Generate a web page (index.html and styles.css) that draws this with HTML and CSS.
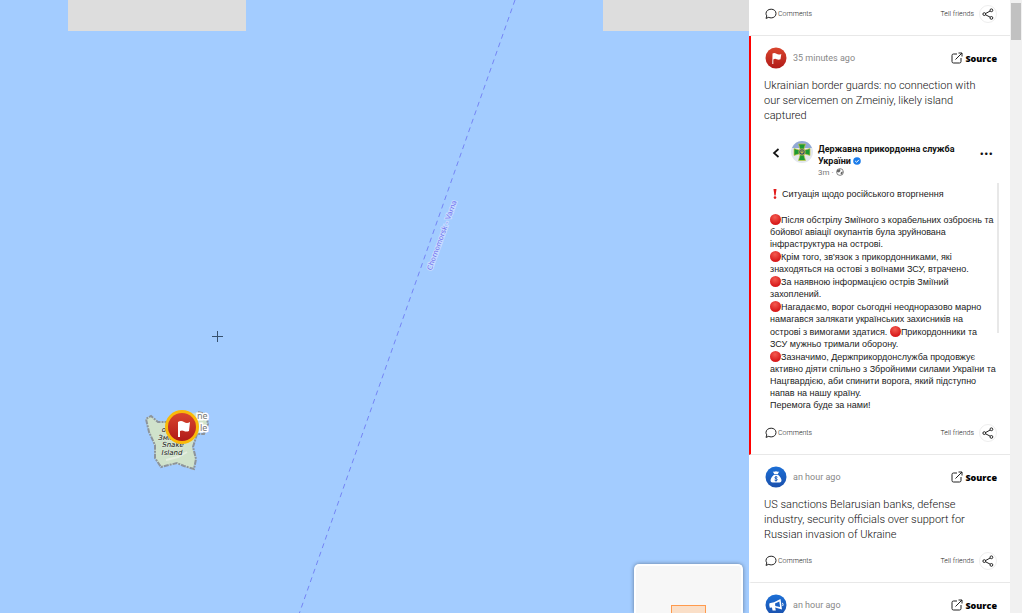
FILE: index.html
```html
<!DOCTYPE html>
<html lang="en">
<head>
    <meta charset="UTF-8">
    <meta name="viewport" content="width=device-width, initial-scale=1.0">
    <title>Live map</title>
    <link rel="stylesheet" href="styles.css">
</head>
<body>
    <!-- shared icons -->
    <svg class="sprite" width="0" height="0">
        <defs>
            <linearGradient id="redFill" x1="0" y1="0" x2="0" y2="1">
                <stop offset="0" stop-color="#d9452e"/>
                <stop offset="1" stop-color="#b01a18"/>
            </linearGradient>
            <linearGradient id="blueFill" x1="0" y1="0" x2="0" y2="1">
                <stop offset="0" stop-color="#1c6fd6"/>
                <stop offset="1" stop-color="#1a50ac"/>
            </linearGradient>
        </defs>
        <symbol id="icon-comment" viewBox="0 0 12 12">
            <path d="M6.200 1.200C9 1.200 11 3 11 5.500S9 9.900 6.200 9.900C5.300 9.900 4.500 9.700 3.800 9.300L1 10.400L1.800 7.900C1.300 7.200 1 6.400 1 5.500C1 3 3.200 1.200 6.200 1.200Z" fill="none" stroke="#222" stroke-width="1"/>
        </symbol>
        <symbol id="icon-share" viewBox="0 0 12 12">
            <path d="M3.600 5.500L8.200 3M3.600 6.800L8.200 9.200" stroke="#222" stroke-width="1"/>
            <g fill="none" stroke="#222" stroke-width="1">
                <circle cx="2.300" cy="6.100" r="1.400"/>
                <circle cx="9.400" cy="2.300" r="1.400"/>
                <circle cx="9.400" cy="9.900" r="1.400"/>
            </g>
        </symbol>
        <symbol id="icon-source" viewBox="0 0 12 12">
            <path d="M6 2H2.500Q1 2 1 3.500V9.500Q1 11 2.500 11H8.500Q10 11 10 9.500V6M4.500 7.500L11 1M7.500 1H11V4.500" fill="none" stroke="#222" stroke-width="1"/>
        </symbol>
        <symbol id="icon-flag" viewBox="0 0 22 22">
            <circle cx="11" cy="11" r="10.500" fill="url(#redFill)"/>
            <path d="M7.500 6.500Q9.500 5.500 11.500 6.800T16.300 7L15.500 12.300Q13.500 13.100 11.700 12.200T8.300 12.500V17H7.300Z" fill="#fff"/>
        </symbol>
        <symbol id="icon-money" viewBox="0 0 22 22">
            <circle cx="11" cy="11" r="10.500" fill="url(#blueFill)"/>
            <path d="M7.800 5.500Q9.500 6 11 5.200Q12.500 6 14.200 5.500L12.800 8H9.200ZM9 8.700H13Q16.500 12 16.500 14.500Q16.500 16.500 14.500 16.500H7.500Q5.500 16.500 5.500 14.500Q5.500 12 9 8.700Z" fill="#fff"/>
            <path d="M12.500 11.300Q11 10.200 10 11.200Q9.300 12.300 11 12.600Q12.800 13 12.100 14.200Q11 15.200 9.500 14.100M11 10V15.600" fill="none" stroke="#1a5cbc" stroke-width="0.900"/>
        </symbol>
        <symbol id="icon-horn" viewBox="0 0 22 22">
            <circle cx="11" cy="11" r="10.500" fill="url(#blueFill)"/>
            <path d="M4.500 9.300L9 8.200L15.500 5L17 15.500L10.200 13.500L10.800 16.500H7.600L6.900 13.600L4.800 13.800Q3.700 11.500 4.500 9.300Z" fill="#fff"/>
            <path d="M10 9.500L14.300 7.400L15.100 13L10.300 11.900Z" fill="#1b61c4"/>
            <path d="M17.300 8.800Q18.700 10.200 17.700 12" stroke="#fff" fill="none"/>
        </symbol>
    </svg>

    <main class="map">
        <svg class="map-canvas" width="1600" height="1200" viewBox="0 0 1600 1200">
            <!-- missing tiles -->
            <path d="M68 0H246V31H68ZM603 0H781V31H603Z" fill="#ddd"/>
            <!-- ferry route -->
            <path d="M515 0L93 1200" fill="none" stroke="#7585f5" stroke-width="1" stroke-dasharray="5 4"/>
            <text class="route-name" text-anchor="middle" transform="translate(444 236) rotate(-70)">Chornomorsk - Varna</text>
            <!-- island -->
            <path d="M146 418L151 416L158 421L168 422L184 416L198 412L207 416L207 430L196 434L192 447L196 458L193 470L184 466L177 464L161 467L155 458L154 444L149 432Z" fill="#d0e2cb"/>
            <path d="M198 412L206 414L208 424L204 434L197 434L193 447L196 459L194 469L184 466L177 463L161 467L155 458L155 445L149 432L146 419L151 416L158 422L168 422" fill="none" stroke="#8d949b" stroke-width="2" stroke-dasharray="5 1 2 1"/>
            <path d="M166 460L178 457L187 452" fill="none" stroke="#e5eddf" stroke-width="2"/>
            <g class="island-name" text-anchor="middle">
                <text x="173" y="432">острів</text>
                <text x="172" y="440">Зміїний</text>
                <text x="173" y="447">Snake</text>
                <text x="172" y="455">Island</text>
            </g>
            <g class="village-name">
                <text x="197" y="419">ne</text>
                <text x="200" y="431">le</text>
            </g>
            <circle cx="182" cy="427" r="17" fill="#f9b90a"/>
            <circle cx="182" cy="427" r="14" fill="url(#redFill)"/>
            <path d="M178 422Q181 420 184 422T190 422L189 431Q186 432 184 431T180 431V437H178Z" fill="#fff"/>
            <!-- cursor -->
            <path d="M212 336.500H223M217.500 331V342" stroke="#36506e" stroke-width="1"/>
        </svg>
        <div class="minimap"><div class="minimap-view"></div></div>
    </main>

    <aside class="feed">
        <article class="card card-first">
            <footer class="card-foot">
                <a class="comments" href="#"><svg class="icon"><use href="#icon-comment"/></svg>Comments</a>
                <button class="share">Tell friends <span class="share-ring"><svg class="icon"><use href="#icon-share"/></svg></span></button>
            </footer>
        </article>

        <article class="card card-active">
            <header class="card-head">
                <svg class="badge"><use href="#icon-flag"/></svg>
                <span class="time">35 minutes ago</span>
                <a class="source" href="#"><svg class="icon"><use href="#icon-source"/></svg>Source</a>
            </header>
            <h2>Ukrainian border guards: no connection with our servicemen on Zmeiniy, likely island captured</h2>
            <section class="post" lang="uk">
                <header class="post-head">
                    <svg class="back" viewBox="0 0 8 12"><path d="M6.500 2L2 6L6.500 10" fill="none" stroke="#111" stroke-width="1.700"/></svg>
                    <svg class="avatar" viewBox="0 0 22 22">
                        <circle cx="11" cy="11" r="11" fill="#e3e7ef"/>
                        <path d="M1 7Q4 0 11 0T21 7Z" fill="#91a9d5"/>
                        <path d="M7.500 3H14.500L12.500 9.500L19 7.500V14.500L12.500 12.500L14.500 19.500H7.500L9.500 12.500L3 14.500V7.500L9.500 9.500Z" fill="#1c9a35" stroke="#c8c944" stroke-width="0.700"/>
                        <circle cx="11" cy="11" r="3.200" fill="#29496a" stroke="#d5c84a" stroke-width="0.800"/>
                        <path d="M9.800 9.500V11.500H12.200V9.500M11 9V13" fill="none" stroke="#e6d34b" stroke-width="0.700"/>
                    </svg>
                    <div class="post-author">
                        <strong>Державна прикордонна служба<br>України <svg class="verified" viewBox="0 0 8 8"><circle cx="4" cy="4" r="3.800" fill="#1b7ceb"/><path d="M2.200 4L3.600 5.300L5.900 2.800" fill="none" stroke="#fff"/></svg></strong>
                        <small>3m · <svg class="globe" viewBox="0 0 8 8"><circle cx="4" cy="4" r="3.400" fill="#fff" stroke="#666" stroke-width="0.800"/><path d="M1 2L4 1L4.500 3L3 4.500L1 4ZM5 4L7 3.500L6 6.500L4.500 6Z" fill="#666"/></svg></small>
                    </div>
                    <span class="more">•••</span>
                </header>
                <div class="post-body">
                    <p class="post-title"><svg class="alert" viewBox="0 0 10 10"><path d="M3.500 0H6.500L5.600 6.500H4.400Z" fill="#e21b1b"/><circle cx="5" cy="8.600" r="1.300" fill="#e21b1b"/></svg>Ситуація щодо російського вторгнення</p>
                    <p><i class="dot"></i>Після обстрілу Зміїного з корабельних озброєнь та<br>бойової авіації окупантів була зруйнована<br>інфраструктура на острові.</p>
                    <p><i class="dot"></i>Крім того, зв'язок з прикордонниками, які<br>знаходяться на остові з воїнами ЗСУ, втрачено.</p>
                    <p><i class="dot"></i>За наявною інформацією острів Зміїний<br>захоплений.</p>
                    <p><i class="dot"></i>Нагадаємо, ворог сьогодні неодноразово марно<br>намагався залякати українських захисників на<br>острові з вимогами здатися. <i class="dot"></i>Прикордонники та<br>ЗСУ мужньо тримали оборону.</p>
                    <p><i class="dot"></i>Зазначимо, Держприкордонслужба продовжує<br>активно діяти спільно з Збройними силами України та<br>Нацгвардією, аби спинити ворога, який підступно<br>напав на нашу країну.<br>Перемога буде за нами!</p>
                </div>
            </section>
            <footer class="card-foot">
                <a class="comments" href="#"><svg class="icon"><use href="#icon-comment"/></svg>Comments</a>
                <button class="share">Tell friends <span class="share-ring"><svg class="icon"><use href="#icon-share"/></svg></span></button>
            </footer>
        </article>

        <article class="card">
            <header class="card-head">
                <svg class="badge"><use href="#icon-money"/></svg>
                <span class="time">an hour ago</span>
                <a class="source" href="#"><svg class="icon"><use href="#icon-source"/></svg>Source</a>
            </header>
            <h2>US sanctions Belarusian banks, defense industry, security officials over support for Russian invasion of Ukraine</h2>
            <footer class="card-foot">
                <a class="comments" href="#"><svg class="icon"><use href="#icon-comment"/></svg>Comments</a>
                <button class="share">Tell friends <span class="share-ring"><svg class="icon"><use href="#icon-share"/></svg></span></button>
            </footer>
        </article>

        <article class="card">
            <header class="card-head">
                <svg class="badge"><use href="#icon-horn"/></svg>
                <span class="time">an hour ago</span>
                <a class="source" href="#"><svg class="icon"><use href="#icon-source"/></svg>Source</a>
            </header>
        </article>
    </aside>
    <div class="scrollbar"><div class="thumb"></div></div>
</body>
</html>
```

FILE: styles.css
```css
body {
    margin: 0;
    height: 100vh;
    display: flex;
    overflow: hidden;
    background: #fff;
    font-family: Roboto, "Liberation Sans", sans-serif;
}
.sprite {
    position: absolute;
}
.map {
    flex: 1;
    min-width: 0;
    position: relative;
    overflow: hidden;
    background: #a3ccff;
}
.map-canvas {
    display: block;
}
.route-name {
    font: 7px "DejaVu Sans", sans-serif;
    fill: #7070f0;
    stroke: #c8dcff;
    stroke-width: 2px;
    paint-order: stroke;
}
.island-name {
    font: italic 7px "DejaVu Sans", sans-serif;
    fill: #111;
    stroke: #dfe9dc;
    stroke-width: 1px;
    paint-order: stroke;
}
.village-name {
    font: 9px "Noto Sans", sans-serif;
    fill: #777;
    stroke: #fff;
    stroke-width: 3px;
    paint-order: stroke;
}
.minimap {
    position: absolute;
    right: 6px;
    bottom: 0;
    width: 105px;
    height: 47px;
    border: 2px solid #fff;
    border-bottom: none;
    border-radius: 5px 5px 0 0;
    background: #f7f7f7;
    box-shadow: 0 0 4px rgba(0, 0, 0, 0.4);
    display: flex;
    align-items: flex-end;
    justify-content: center;
}
.minimap-view {
    width: 33px;
    height: 7px;
    border: 1px solid #ff9a4d;
    border-bottom: none;
    background: #fadfc8;
}
.feed {
    width: 261px;
    flex-shrink: 0;
    overflow: hidden;
}
.card {
    padding: 11px 13px 12px;
    border-left: 2px solid #fff;
    border-bottom: 1px solid #e8e8e8;
}
.card-first {
    padding-top: 5px;
}
.card-active {
    border-left-color: #f00;
}
.icon {
    width: 12px;
    height: 12px;
}
.card-head {
    display: flex;
    align-items: center;
    padding-left: 1px;
}
.badge {
    width: 22px;
    height: 22px;
}
.time {
    margin-left: 6px;
    font-size: 9px;
    color: #888;
}
.source {
    margin-left: auto;
    display: flex;
    align-items: center;
    gap: 2px;
    font: 800 9px "Open Sans", sans-serif;
    color: #000;
    text-decoration: none;
}
h2 {
    margin: 9px 0 0;
    padding-right: 12px;
    font-size: 11px;
    line-height: 15px;
    font-weight: 300;
    color: #111;
}
.card-foot {
    display: flex;
    justify-content: space-between;
    align-items: center;
    margin-top: 10px;
    padding-left: 1px;
}
.card-first .card-foot {
    margin-top: 0;
}
.comments, .share {
    display: flex;
    align-items: center;
    gap: 1px;
    font: 300 7px Roboto, sans-serif;
    color: #222;
    text-decoration: none;
}
.share {
    gap: 5px;
    padding: 0;
    border: none;
    background: none;
}
.share-ring {
    display: flex;
    padding: 2px;
    border: 1px solid #eee;
    border-radius: 50%;
}
.post {
    padding: 18px 0 3px 6px;
    font-size: 9px;
    line-height: 12px;
    color: #222;
    white-space: nowrap;
}
.post-head {
    display: flex;
    align-items: flex-start;
    color: #111;
}
.back {
    width: 8px;
    height: 12px;
    margin: 6px 11px 0 2px;
}
.avatar {
    width: 22px;
    height: 22px;
    margin-right: 5px;
}
.post-author {
    flex: 1;
    padding-top: 2px;
}
.post-author strong {
    display: block;
    font-weight: 700;
}
.post-author small {
    display: block;
    font-size: 8px;
    color: #777;
}
.verified, .globe {
    width: 8px;
    height: 8px;
    vertical-align: -1px;
}
.more {
    padding: 6px 4px 0 0;
    font: 8px/12px Inter, sans-serif;
}
.post-body {
    position: relative;
    padding-top: 9px;
    font-family: "Liberation Sans", sans-serif;
}
/* scroll track of the embedded post */
.post-body::after {
    content: "";
    position: absolute;
    top: 4px;
    right: -2px;
    width: 2px;
    height: 150px;
    background: #e8e8e8;
}
.post-body p {
    margin: 0;
}
.post-body .post-title {
    margin-bottom: 13px;
}
.alert {
    width: 10px;
    height: 10px;
    margin-right: 2px;
    vertical-align: -2px;
}
.dot {
    display: inline-block;
    width: 11px;
    height: 11px;
    margin-top: 1px;
    border-radius: 50%;
    background: radial-gradient(circle at 45% 30%, #f45b50, #d91e1e 65%);
    vertical-align: -2px;
}
.scrollbar {
    width: 12px;
    flex-shrink: 0;
    margin-right: 2px;
    background: #f1f1f1;
}
.thumb {
    height: 37px;
    margin: 3px 1px 0;
    background: #c1c1c1;
}
```
